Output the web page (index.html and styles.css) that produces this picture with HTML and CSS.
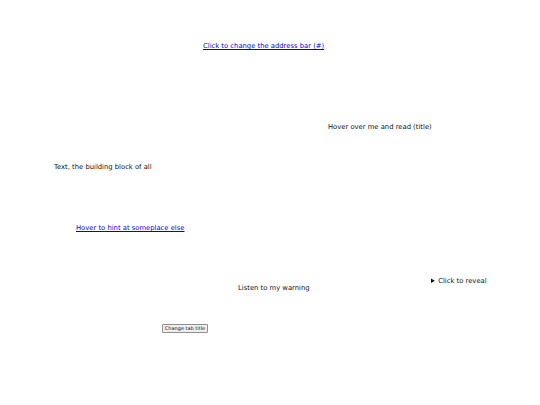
FILE: index.html
```html
<!DOCTYPE html>
<html>
<head>
<meta charset="utf-8">
<link rel="stylesheet" href="styles.css">
</head>
<body>
<div class="canvas">
  <a class="item i1" href="#">Click to change the address bar (#)</a>
  <span class="item i2" title="title">Hover over me and read (title)</span>
  <p class="item i3">Text, the building block of all</p>
  <a class="item i4" href="#">Hover to hint at someplace else</a>
  <details class="item i5"><summary>Click to reveal</summary>Revealed</details>
  <span class="item i6">Listen to my warning</span>
  <button class="item i7">Change tab title</button>
</div>
</body>
</html>
```
FILE: styles.css
```css
html, body { margin: 0; padding: 0; background: #fff; }
.canvas { position: relative; width: 540px; height: 405px; font-family: "DejaVu Sans", sans-serif; font-size: 6.8px; color: #111; }
.item { position: absolute; margin: 0; white-space: nowrap; line-height: 8px; }
a.item { color: #0000ee; text-decoration: underline; }
.i1 { left: 203px; top: 42px; }
.i2 { left: 328px; top: 123px; }
.i3 { left: 54px; top: 163px; }
.i4 { left: 76px; top: 224px; }
.i5 { left: 431px; top: 277px; }
.i6 { left: 238px; top: 284px; }
.i7 { left: 162px; top: 324px; width: 46px; height: 9px; box-sizing: border-box; font-family: "DejaVu Sans", sans-serif; font-size: 5px; line-height: 7px; padding: 0; border: 1px solid #8f8f8f; background: #efefef; color: #111; border-radius: 1px; }
```
